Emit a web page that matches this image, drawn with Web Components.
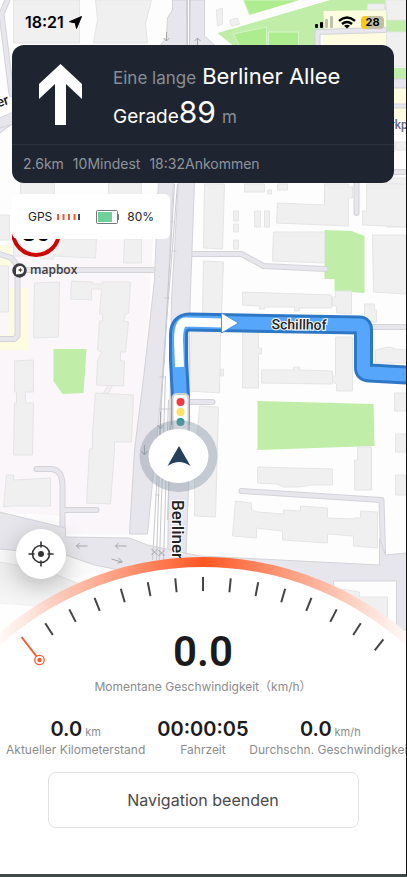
<!DOCTYPE html>
<html lang="de">
<head>
<meta charset="utf-8">
<meta name="viewport" content="width=device-width, initial-scale=1">
<title>Navigation</title>
<style>
  html, body { height: 100%; margin: 0; }
  body { font-family: Inter, "Liberation Sans", sans-serif; background: #fdfdfd; }
</style>
</head>
<body>
<nav-screen>
  <city-map slot="map"></city-map>
  <status-bar time="18:21" battery="28"></status-bar>
  <turn-banner>
    <span slot="prefix">Eine lange</span>
    <span slot="street">Berliner Allee</span>
    <span slot="action">Gerade</span>
    <span slot="distance">89</span>
    <span slot="unit">m</span>
    <span slot="trip">2.6km</span>
    <span slot="trip">10Mindest</span>
    <span slot="trip">18:32Ankommen</span>
  </turn-banner>
  <device-status limit="30">80%</device-status>
  <map-credit>mapbox</map-credit>
  <locate-button slot="locate"></locate-button>
  <speed-panel slot="panel">
    <span slot="speed">0.0</span>
    <span slot="caption">Momentane Geschwindigkeit（km/h）</span>
    <trip-stat unit="km" label="Aktueller Kilometerstand">0.0</trip-stat>
    <trip-stat label="Fahrzeit">00:00:05</trip-stat>
    <trip-stat unit="km/h" label="Durchschn. Geschwindigkeit">0.0</trip-stat>
    <span slot="stop">Navigation beenden</span>
  </speed-panel>
</nav-screen>

<script>
function attach(el, html) {
  el.attachShadow({ mode: 'open' }).innerHTML = html;
}

class NavScreen extends HTMLElement {
  constructor() {
    super();
    attach(this, `
      <style>
        :host {
          display: flex;
          flex-direction: column;
          position: relative;
          box-sizing: border-box;
          min-height: 100%;
          overflow: hidden;
          border-right: 1px solid #111;
          border-bottom: 3px solid #404849;
        }
        .map { position: absolute; inset: 0; }
        .top {
          position: relative;
          display: flex;
          flex-direction: column;
          padding: 0 12px;
        }
        .bottom {
          position: relative;
          display: flex;
          flex-direction: column;
          margin-top: auto;
        }
        .locate { padding-left: 16px; margin-bottom: -22px; z-index: 1; align-self: flex-start; }
      </style>
      <div class="map"><slot name="map"></slot></div>
      <div class="top"><slot></slot></div>
      <div class="bottom">
        <div class="locate"><slot name="locate"></slot></div>
        <slot name="panel"></slot>
      </div>
    `);
  }
}

class CityMap extends HTMLElement {
  constructor() {
    super();
    attach(this, `
      <style>
        :host { display: block; height: 100%; }
        svg { display: block; width: 100%; height: 100%; }
        .bld { fill: #f0f0f0; stroke: #e5e5e6; stroke-width: 1; }
        .green { fill: #c0eea8; }
        .case { fill: none; stroke: #d3d3da; stroke-linecap: round; stroke-linejoin: round; }
        .road { fill: none; stroke: #e7e6ec; stroke-linecap: round; stroke-linejoin: round; }
        .thin { fill: none; stroke: #c9c9cf; stroke-width: 1; }
        .dir { fill: none; stroke: #a5a5aa; stroke-width: 1; }
        text { font-family: Roboto, "Liberation Sans", sans-serif; font-weight: 500; fill: #222; stroke: #fff; stroke-width: 2; paint-order: stroke; }
        .place { fill: #66668a; }
      </style>
      <svg viewBox="0 0 407 874" preserveAspectRatio="xMidYMin slice" aria-hidden="true">
        <rect width="407" height="874" fill="#fdfdfd"/>
        <path d="M0 260L60 236L155 215L150 300L134 534L66 534L62 516L0 512Z" fill="#fbf6fa"/>
        <!-- residential blocks with a yellow tint -->
        <path d="M0 245H12V266H0ZM9 288H29V350H0V335H9Z" fill="#fdfce0"/>
        <!-- parks -->
        <path class="green" d="M242 0H407V22L388 32H320V46H234L218 33L330 0Z"/>
        <path d="M244 0H304L250 15ZM234 34L267 27V46H240ZM269 32H299V46H269Z" fill="#aeec90" stroke="#d5f4c6"/>
        <path d="M330 0L232 29L215 29L222 24L300 0Z" fill="#fdfdfd"/>
        <path d="M324 11L387 10V46H325Z" fill="#fdfce0"/>
        <path class="green" d="M387 20H407V32H387ZM387 68H407V80H387Z"/>
        <path d="M387 88H407V122H387Z" fill="#fdfce0"/>
        <path class="green" d="M325 230L352 231L365 236V293L335 291V279H325Z"/>
        <path class="green" d="M258 401L374 404L375 446L258 450Z"/>
        <path class="green" d="M54 349H87L84 393L63 394L54 381Z"/>
        <!-- buildings -->
        <path class="bld" d="M14 0H80V43H14ZM96 0H152L146 24L148 43H94L98 20Z"/>
        <path class="bld" d="M217 10L223 8V24L218 26ZM230 20L238 18L240 24L232 26ZM368 4H385V10H368ZM386 0H407V20H388Z"/>
        <path class="bld" d="M387 178H407V227H387ZM387 32H407V67H387Z"/>
        <path class="bld" d="M21 183H55V196H21ZM109 183H142V196H109ZM0 215H10V240H0ZM14 239H97L96 258L54 256V259H41V256H14ZM125 239H142V263H124Z"/>
        <path class="bld" d="M0 266H9V312H0ZM35 283L60 282L59 337L34 338ZM72 281L93 282V284H103V282H131L129 313L126 314L124 321L129 322L126 352H121V361H125L124 386L97 385L98 361L102 352L98 350L100 321H103V314H100L102 289H92V300L71 299Z"/>
        <path class="bld" d="M15 361L34 360V392H26V403H34L33 455L14 455L15 403H17V392H15ZM108 386H113L108 394L104 393ZM96 393L134 395L132 442H115V449L111 504L87 503L90 449H93V433Z"/>
        <path class="bld" d="M7 475H14V480L51 478V506H12L4 507Z"/>
        <path class="bld" d="M205 184H225L223 249L204 248ZM204 261L224 262L222 314H203ZM234 211H239V221H234ZM234 224H239V232H234ZM234 240H239V249H234ZM255 211H261V227H255ZM265 211H270V227H265ZM245 184H265V192H245ZM268 190H272V194H268ZM278 184H288V190H278Z"/>
        <path class="bld" d="M278 203L325 205V184H349V187H353V198H349V226L277 223ZM274 232H325V263L273 261ZM367 184H407V227L363 225V211H367ZM373 235H407V294L374 292Z"/>
        <path class="bld" d="M243 292L332 295V308H300V311H295V307H265V309H260V306L243 305ZM336 291H352V314L337 313V306H333V297H336ZM365 304H375V310H377V322H365ZM376 350L384 348L390 347L396 349L407 350V363H376Z"/>
        <path class="bld" d="M203 332H221L220 393L190 391L192 332ZM243 333H259V348H262V354H259V388H243ZM262 370H294V367H300V370L333 371V384L262 383ZM336 337H353V391H337V384L333 382V376H336ZM221 369H224V376H221Z"/>
        <path class="bld" d="M200 406L219 407L216 517L195 516V470ZM258 467L333 469V485H312L300 487H284L277 484L258 483ZM358 447H372V490H355V460H358ZM395 393H407V411H395ZM396 434H407V452H396ZM396 475H407V495H396Z"/>
        <path class="bld" d="M236 501L252 503V510L258 512L284 514V510L301 511V506L328 508V518L355 519V518H361V511L378 512V548L354 546V536L328 534V543L283 540V531L257 528V538L233 536Z"/>
        <path class="bld" d="M390 140H395V152H390ZM396 142H407V150H396Z"/>
        <!-- small streets -->
        <g class="case" stroke-width="6">
          <path d="M8 0L2 14L12 94M0 130L14 120M0 254L12 258L18 266V336L15 339H0M18 270H154M192 254H242L264 266L326 269M357 184V213M370 327H407M190 402H213M242 491L382 500L384 570M37 469H52Q63 470 63 486V540M64 510H97M318 46V32L385 30M395 172H407"/>
        </g>
        <g class="road" stroke-width="4">
          <path d="M8 0L2 14L12 94M0 130L14 120M0 254L12 258L18 266V336L15 339H0M18 270H154M192 254H242L264 266L326 269M357 184V213M370 327H407M190 402H213M242 491L382 500L384 570M37 469H52Q63 470 63 486V540M64 510H97M318 46V32L385 30M395 172H407"/>
        </g>
        <!-- main roads -->
        <path d="M173 0H187V46H160L167 38L168 18L173 10ZM191 0H205V36L216 46H190Z" fill="#e7e6ec" stroke="#d3d3da"/>
        <path d="M159 180H174L165 360L148 534H130L135 450L145 370L155 280Z" fill="#e7e6ec" stroke="#d3d3da"/>
        <path d="M179 180H195L190 320V460L186 570H168L172 300Z" fill="#e7e6ec" stroke="#d3d3da"/>
        <path d="M0 532L66 552L110 566L60 584L0 560Z" fill="#fafafa"/>
        <path d="M0 562L45 570L80 584L40 606L0 603Z" class="bld"/>
        <path d="M0 512L66 528V537L130 538L148 545L200 556L380 565V538L386 555L407 553V630H397V581H334L335 600L200 570H120L95 565L66 555L0 549Z" fill="#e7e6ec" stroke="#d3d3da"/>
        <path d="M335 582H396V628H370L335 600Z" fill="#fdfdfd"/>
        <path class="bld" d="M340 589L360 592V597H388V620H340Z"/>
        <path d="M0 118L14 112V124L0 128ZM387 79H407V88H387ZM387 104H407V108H387Z" fill="#e7e6ec" stroke="#d3d3da"/>
        <!-- tram tracks -->
        <path class="thin" d="M178 184L164 360L153 560M175 184L162 400L157 560M166 376L160 560M169 400L164 560M172 400L168 520M188 0V46M190 0V46M171 222H174M173 251H177M165 298H170M160 377H165M159 409H172M156 495H160"/>
        <path class="dir" d="M161 412V428M158 425L161 429L164 425M145 445V454M142 451L145 455L148 451M77 546H88M80 543L77 546L80 549M116 546H127M119 543L116 546L119 549M112 559L122 562M119 558L123 562L118 563M167 32V41M164 38L167 41L170 38M198 45V38M195 41L198 38L201 41M152 549L158 555M158 549L152 555M159 550L165 556M165 550L159 556"/>
        <!-- route -->
        <g fill="none" stroke-linejoin="round">
          <path d="M181 425V398L179 360V335Q179 322 190 322L360 325Q364 325 364 330V368Q364 373 370 373L407 375" stroke="#2c77c6" stroke-width="19"/>
          <path d="M181 425V398L179 360V335Q179 322 190 322L360 325Q364 325 364 330V368Q364 373 370 373L407 375" stroke="#56a7fb" stroke-width="13"/>
          <path d="M180 367L179 340Q179 322 186 322L224 323" stroke="#fff" stroke-width="9"/>
        </g>
        <path d="M222 313L239 323L222 333Z" fill="#fff" stroke="#4b94df"/>
        <text x="272" y="329" font-size="14" transform="rotate(1 272 329)" stroke="#cfdcea">Schillhof</text>
        <text x="172" y="500" font-size="17" transform="rotate(90 172 500)">Berliner</text>
        <text x="-9" y="110" font-size="14" transform="rotate(-18 -9 110)">ner</text>
        <text class="place" x="391" y="129" font-size="12">rkp</text>
        <!-- signal and own position -->
        <rect x="173" y="394" width="16" height="40" rx="4" fill="#fff" stroke="#c9ccd2" stroke-width="2"/>
        <circle cx="181" cy="402" r="4" fill="#f23b3f"/>
        <circle cx="181" cy="412" r="4" fill="#fde15f"/>
        <circle cx="181" cy="422" r="4" fill="#2d9796"/>
        <ellipse cx="179" cy="456" rx="39" ry="36" fill="#8797a8" fill-opacity=".42"/>
        <ellipse cx="179" cy="456" rx="30" ry="27" fill="#fff"/>
        <path d="M179.500 446L191 466Q185 462 179.500 462Q174 462 168 466Z" fill="#263f5c"/>
      </svg>
    `);
  }
}

class StatusBar extends HTMLElement {
  constructor() {
    super();
    attach(this, `
      <style>
        :host { display: flex; align-items: center; justify-content: space-between; height: 44px; padding: 0 10px 0 13px; color: #000; }
        .group { display: flex; align-items: center; gap: 5px; }
        .time { font-size: 16px; font-weight: 600; line-height: 20px; }
        .battery {
          display: flex; align-items: center; justify-content: center;
          width: 23px; height: 13px; border-radius: 4px;
          background: linear-gradient(90deg, #fbc90f 30%, #c3bfa4 30%);
          font-size: 11px; font-weight: 700; line-height: 13px;
        }
      </style>
      <div class="group">
        <span class="time"></span>
        <svg width="13" height="13" viewBox="0 0 13 13"><path d="M12.500 .5L7.500 12.500L6.300 6.900L.5 5.700Z" stroke="#000" stroke-linejoin="round"/></svg>
      </div>
      <div class="group">
        <svg width="18" height="12" viewBox="0 0 18 12"><rect y="8" width="3" height="4" rx="1"/><rect x="5" y="6" width="3" height="6" rx="1"/><g fill="#bfc3ae"><rect x="10" y="3" width="3" height="9" rx="1"/><rect x="15" width="3" height="12" rx="1"/></g></svg>
        <svg width="18" height="13" viewBox="0 0 18 13" fill="none" stroke="#000" stroke-width="2.400"><path d="M1 4.800Q9 -2 17 4.800M4 8Q9 3.800 14 8"/><path d="M9 12.500L6 9.700Q9 7.600 12 9.700Z" fill="#000" stroke="none"/></svg>
        <span class="battery"></span>
      </div>
    `);
  }

  connectedCallback() {
    this.shadowRoot.querySelector('.time').textContent = this.getAttribute('time');
    this.shadowRoot.querySelector('.battery').textContent = this.getAttribute('battery');
  }
}

class TurnBanner extends HTMLElement {
  constructor() {
    super();
    attach(this, `
      <style>
        :host { display: block; margin-top: 1px; border-radius: 12px; background: #1e2531; color: #fff; }
        .main { display: flex; align-items: center; gap: 30px; height: 99px; padding: 0 26px; }
        .text { padding-top: 4px; }
        .line { display: flex; align-items: baseline; white-space: nowrap; line-height: 34px; }
        .muted { color: #898e96; font-size: 17px; }
        .street { margin-left: 6px; font-size: 22px; }
        .action { font-size: 19px; }
        .distance { font-size: 30px; }
        .unit { margin-left: 6px; }
        .trip {
          display: flex; gap: 9px; padding: 10px 11px; border-top: 1px solid #2c333f;
          color: #8f949b; font-size: 14px; line-height: 18px;
        }
      </style>
      <div class="main">
        <svg width="45" height="61" viewBox="0 0 45 61"><path d="M22.500 0L44 20V35L28 20V61H17V20L1 35V20Z" fill="#fff"/></svg>
        <div class="text">
          <div class="line"><span class="muted"><slot name="prefix"></slot></span><span class="street"><slot name="street"></slot></span></div>
          <div class="line"><span class="action"><slot name="action"></slot></span><span class="distance"><slot name="distance"></slot></span><span class="muted unit"><slot name="unit"></slot></span></div>
        </div>
      </div>
      <div class="trip"><slot name="trip"></slot></div>
    `);
  }
}

class DeviceStatus extends HTMLElement {
  constructor() {
    super();
    attach(this, `
      <style>
        :host { display: block; position: relative; align-self: flex-start; margin-top: 11px; }
        .card {
          position: relative; display: flex; align-items: center; box-sizing: border-box;
          height: 45px; padding: 0 16px; border-radius: 6px; background: #fff; color: #222;
          font-size: 12px;
        }
        .bars { margin: 0 16px 0 5px; }
        .cell { margin-right: 8px; }
        /* speed limit sign sits half hidden below the card */
        .sign { position: absolute; left: 0; top: 14px; }
        .sign text { font: 700 26px "Liberation Sans", sans-serif; }
      </style>
      <svg class="sign" width="50" height="50" viewBox="0 0 50 50"><circle cx="24" cy="24" r="23" fill="#fff" stroke="#cf0404" stroke-width="4"/><text x="24" y="33" text-anchor="middle"></text></svg>
      <div class="card">
        <span>GPS</span>
        <svg class="bars" width="23" height="8" viewBox="0 0 23 8"><path d="M1 1V7M6.500 1V7M12 1V7M17.500 1V7" stroke="#f8592d" stroke-width="2"/><path d="M22 1V7" stroke="#444" stroke-width="2"/></svg>
        <svg class="cell" width="23" height="14" viewBox="0 0 23 14"><rect x=".5" y=".5" width="21" height="13" rx="1" fill="#fff" stroke="#777"/><rect x="2" y="2" width="14" height="10" fill="#6fd09a"/><path d="M22.500 4V10" stroke="#777"/></svg>
        <span><slot></slot></span>
      </div>
    `);
  }

  connectedCallback() {
    this.shadowRoot.querySelector('text').textContent = this.getAttribute('limit');
  }
}

class MapCredit extends HTMLElement {
  constructor() {
    super();
    attach(this, `
      <style>
        :host { display: flex; align-items: center; gap: 3px; margin-top: 22px; color: #3d3d3f; font: 600 12px/18px "Open Sans", sans-serif; }
      </style>
      <svg width="15" height="15" viewBox="0 0 15 15"><circle cx="7.500" cy="7.500" r="7.200" fill="#3d3d3f"/><path d="M4 11.200V7A4 4 0 1 1 8 11Q6 11.600 4 11.200Z" fill="#fff"/><path d="M8.300 4.600L9 6.300L10.800 7L9 7.700L8.300 9.400L7.600 7.700L5.800 7L7.600 6.300Z" fill="#3d3d3f"/></svg>
      <span><slot></slot></span>
    `);
  }
}

class LocateButton extends HTMLElement {
  constructor() {
    super();
    attach(this, `
      <style>
        :host { display: block; }
        button {
          display: flex; align-items: center; justify-content: center;
          width: 50px; height: 50px; padding: 0; border: 0; border-radius: 50%;
          background: #fff; box-shadow: 0 6px 24px rgba(0, 0, 0, .25);
        }
      </style>
      <button aria-label="Position zentrieren">
        <svg width="26" height="26" viewBox="0 0 26 26" fill="none" stroke="#333" stroke-width="1.600" stroke-linecap="round"><circle cx="13" cy="13" r="8.500"/><circle cx="13" cy="13" r="3" fill="#333" stroke="none"/><path d="M13 1V6M13 20V25M1 13H6M20 13H25"/></svg>
      </button>
    `);
  }
}

class SpeedPanel extends HTMLElement {
  constructor() {
    super();
    attach(this, `
      <style>
        :host { display: grid; grid-template-columns: 100%; color: #1b1b1d; }
        .dial, .body { grid-row: 1; grid-column: 1; }
        .dial { display: flex; flex-direction: column; }
        .dial svg { display: block; width: 100%; }
        .fill { flex: 1; background: #fff; }
        .body { position: relative; display: flex; flex-direction: column; align-items: center; padding: 71px 0 46px; }
        .speed { font: 600 42px/48px Roboto, sans-serif; }
        .caption { margin-top: 2px; color: #8c8c8e; font-size: 12px; line-height: 18px; white-space: nowrap; font-family: Inter, "Noto Sans CJK SC", sans-serif; }
        .stats { display: grid; grid-template-columns: repeat(3, minmax(0, 1fr)); width: 100%; box-sizing: border-box; padding: 0 12px; margin-top: 21px; overflow: hidden; }
        button {
          box-sizing: border-box; width: calc(100% - 95px); height: 56px; margin-top: 13px;
          border: 1px solid #e3e3e4; border-radius: 8px; background: #fff; color: #4a4a4c;
          font: 400 16px/20px Inter, sans-serif;
        }
      </style>
      <div class="dial">
        <svg viewBox="0 0 406 110">
          <defs>
            <linearGradient id="rim"><stop offset="0" stop-color="#fff"/><stop offset=".08" stop-color="#fee9e2"/><stop offset=".5" stop-color="#fe5722"/><stop offset=".92" stop-color="#fee9e2"/><stop offset="1" stop-color="#fff"/></linearGradient>
            <linearGradient id="fade" x2="0" y2="1"><stop offset="0" stop-color="#fff" stop-opacity="0"/><stop offset="1" stop-color="#fff"/></linearGradient>
          </defs>
          <rect y="20" width="60" height="62" fill="url(#fade)"/>
          <rect y="82" width="60" height="28" fill="#fff"/>
          <circle cx="203" cy="312" r="302" fill="#fff"/>
          <path d="M-10 91A307 307 0 0 1 416 91" fill="none" stroke="url(#rim)" stroke-width="10"/>
          <g id="ticks" stroke="#444" stroke-width="2"></g>
          <path d="M21.500 80L37 100" stroke="#fb5a2c" stroke-width="2"/>
          <circle cx="39.500" cy="103" r="4.700" fill="#fff" stroke="#fb5a2c" stroke-width="1.300"/>
          <circle cx="39.500" cy="103" r="2.200" fill="#fb5a2c"/>
        </svg>
        <div class="fill"></div>
      </div>
      <div class="body">
        <div class="speed"><slot name="speed"></slot></div>
        <div class="caption"><slot name="caption"></slot></div>
        <div class="stats"><slot></slot></div>
        <button><slot name="stop"></slot></button>
      </div>
    `);
    this.drawTicks();
  }

  drawTicks() {
    const group = this.shadowRoot.getElementById('ticks');
    // the needle takes the place of the first tick
    for (let i = -6; i <= 7; i++) {
      const line = document.createElementNS('http://www.w3.org/2000/svg', 'line');
      line.setAttribute('x1', 203);
      line.setAttribute('x2', 203);
      line.setAttribute('y1', 20);
      line.setAttribute('y2', 34);
      line.setAttribute('transform', `rotate(${i * 5.45} 203 312)`);
      group.appendChild(line);
    }
  }
}

class TripStat extends HTMLElement {
  constructor() {
    super();
    attach(this, `
      <style>
        :host { display: flex; flex-direction: column; align-items: center; white-space: nowrap; }
        .row { display: flex; align-items: baseline; gap: 3px; height: 24px; line-height: 24px; }
        .value { font-size: 20px; font-weight: 600; }
        .unit { font-size: 11px; color: #8c8c8e; }
        .label { font-size: 12px; line-height: 18px; color: #8c8c8e; }
      </style>
      <div class="row"><span class="value"><slot></slot></span><span class="unit"></span></div>
      <div class="label"></div>
    `);
  }

  connectedCallback() {
    const unit = this.shadowRoot.querySelector('.unit');
    if (this.hasAttribute('unit')) {
      unit.textContent = this.getAttribute('unit');
    } else {
      unit.remove();
    }
    this.shadowRoot.querySelector('.label').textContent = this.getAttribute('label');
  }
}

customElements.define('nav-screen', NavScreen);
customElements.define('city-map', CityMap);
customElements.define('status-bar', StatusBar);
customElements.define('turn-banner', TurnBanner);
customElements.define('device-status', DeviceStatus);
customElements.define('map-credit', MapCredit);
customElements.define('locate-button', LocateButton);
customElements.define('speed-panel', SpeedPanel);
customElements.define('trip-stat', TripStat);
</script>
</body>
</html>
